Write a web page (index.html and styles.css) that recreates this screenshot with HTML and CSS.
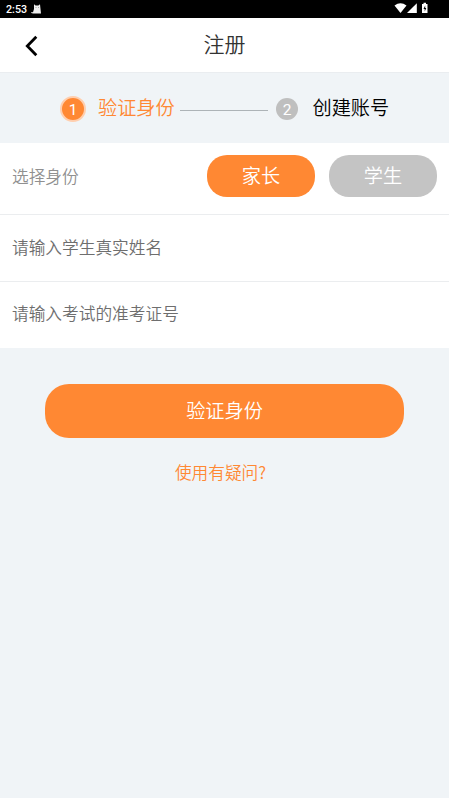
FILE: index.html
```html
<!DOCTYPE html>
<html lang="zh-CN">
<head>
<meta charset="utf-8">
<title>注册</title>
<link rel="stylesheet" href="styles.css">
</head>
<body>
<div class="status">
  <span class="time">2:53</span>
  <svg class="cat" width="11" height="10" viewBox="0 0 11 10"><path d="M3 .2 4.600 1.500h2.800L9 .2 9.400 4 10 9.500H2L.3 9V8l1.700.3L3 5z" fill="#eee"/><path d="M4.500 3.500h1M7 3.500h1" stroke="#888" stroke-width=".7"/></svg>
  <svg class="signals" width="36" height="12" viewBox="0 0 36 12"><path d="M0.500 3.500Q6.500-.8 12.500 3.500L6.500 11z" fill="#fff"/><path d="M22.800 1.200V11H13z" fill="#fff"/><path d="M28 2h1.500V.7h2.500V2h1.500v9H28z" fill="#fff"/><path d="M31.200 3.500 29.500 7h1.200v2.500L32.300 6h-1.100z" fill="#000"/></svg>
</div>
<header class="header">
  <svg class="back" width="14" height="22" viewBox="0 0 14 22"><path d="M12.300 1.800 3.300 11l9 9.200" fill="none" stroke="#000" stroke-width="2.800"/></svg>
  <h1 class="title">注册</h1>
</header>
<div class="steps">
  <span class="dot dot-active">1</span>
  <span class="step-label step-active">验证身份</span>
  <span class="line"></span>
  <span class="dot">2</span>
  <span class="step-label step-next">创建账号</span>
</div>
<main>
  <div class="row role-row">
    <span class="role-label">选择身份</span>
    <span class="pill pill-active">家长</span>
    <span class="pill">学生</span>
  </div>
  <div class="row field">请输入学生真实姓名</div>
  <div class="row field last">请输入考试的准考证号</div>
</main>
<div class="submit">验证身份</div>
<div class="help">使用有疑问?</div>
</body>
</html>
```
FILE: styles.css
```css
* { box-sizing: border-box; }
body {
  margin: 0;
  min-height: 798px;
  background: #f0f4f7;
  font-family: Roboto, "Noto Sans CJK SC", sans-serif;
  font-weight: 350;
  font-size: 16.7px;
}
.status {
  display: flex;
  align-items: center;
  height: 18px;
  padding: 0 19px 0 6px;
  background: #000;
  color: #fff;
}
.time { width: 25px; font-size: 10.7px; font-weight: 500; line-height: 18px; padding-top: 1px; }
.signals { margin-left: auto; margin-top: -2px; }
.header {
  display: grid;
  grid-template-columns: 50px 1fr 50px;
  align-items: center;
  height: 54px;
  background: #fff;
}
.back { margin: 1px 0 0 24px; }
.title {
  margin: 0;
  text-align: center;
  font-size: 21px;
  font-weight: 350;
  line-height: 54px;
  color: #333;
}
.steps {
  display: flex;
  align-items: center;
  height: 71.4px;
  padding: 2px 0 0 60px;
  border-top: 1px solid #eaedf0;
}
.dot {
  width: 22px;
  height: 22px;
  border-radius: 50%;
  background: #bfbfbf;
  color: #fff;
  font-size: 15.5px;
  font-weight: 400;
  line-height: 24px;
  text-align: center;
}
.dot-active {
  width: 26px;
  height: 26px;
  border: 2px solid #ffceae;
  background: #ff8833;
}
.step-label { width: 77px; font-size: 19.2px; line-height: 28px; white-space: nowrap; }
.step-active { margin-left: 12px; color: #ff8833; }
.step-next { margin-left: 14.5px; color: #000; }
.line { width: 88px; height: 1px; margin: 2px 8px 0 5px; background: #adb3b7; }
.row {
  display: flex;
  align-items: center;
  height: 67px;
  padding: 0 12px 2px;
  background: #fff;
  border-bottom: 1px solid #ebedef;
  color: #6e6e6e;
}
.role-row { height: 71.6px; padding-bottom: 5px; }
.role-label { margin-right: auto; color: #909090; }
.pill {
  width: 108px;
  height: 42px;
  margin-left: 14px;
  border-radius: 20px;
  background: #c4c4c4;
  color: #fff;
  font-size: 19.2px;
  line-height: 43px;
  text-align: center;
}
.pill-active { background: #ff8833; }
.last { height: 66px; padding-bottom: 4px; border-bottom: 0; }
.submit {
  height: 54px;
  margin: 36px 45px 0;
  border-radius: 24px;
  background: #ff8833;
  color: #fff;
  font-size: 19.2px;
  line-height: 55px;
  text-align: center;
}
.help {
  margin-top: 22px;
  padding-right: 8px;
  font-family: "Noto Sans CJK SC", sans-serif;
  line-height: 25px;
  text-align: center;
  color: #ff8833;
}
```
